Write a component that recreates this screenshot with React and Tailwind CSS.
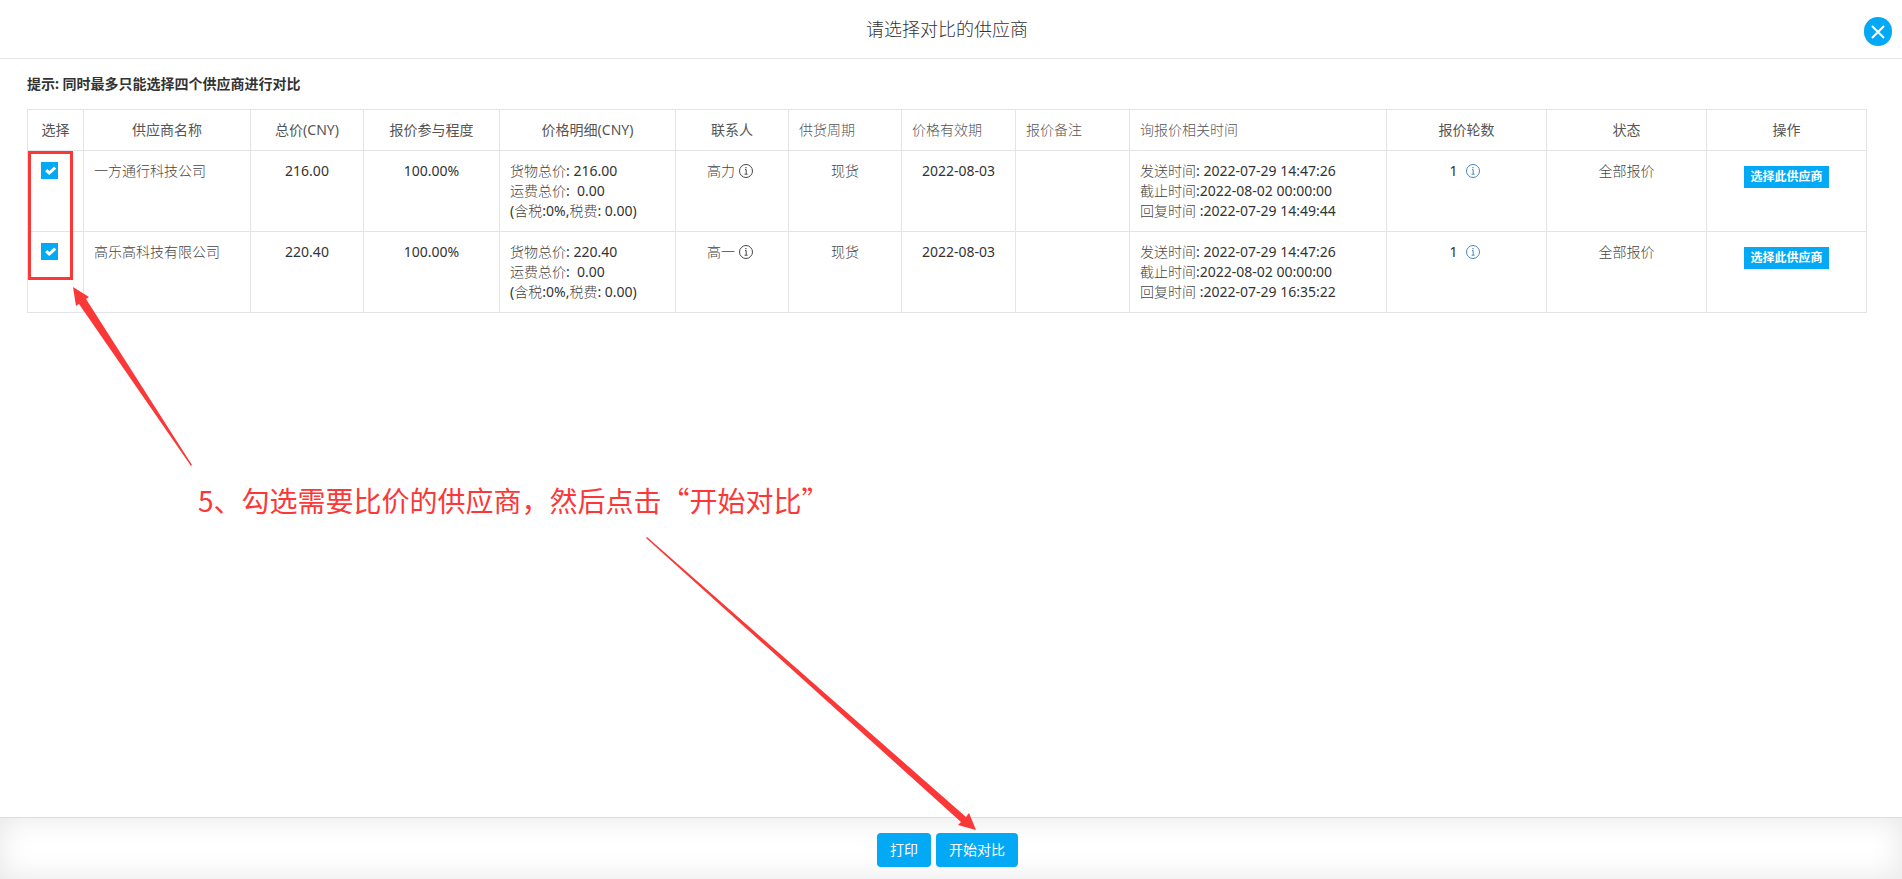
import React, { useState } from 'react';

const COLUMNS = [
  { title: '选择', width: 56, align: 'text-center', strong: true },
  { title: '供应商名称', width: 167, align: 'text-center', strong: true },
  { title: '总价(CNY)', width: 113, align: 'text-center', strong: true },
  { title: '报价参与程度', width: 136, align: 'text-center', strong: true },
  { title: '价格明细(CNY)', width: 176, align: 'text-center', strong: true },
  { title: '联系人', width: 113, align: 'text-center', strong: true },
  { title: '供货周期', width: 113, align: 'text-left' },
  { title: '价格有效期', width: 114, align: 'text-left' },
  { title: '报价备注', width: 114, align: 'text-left' },
  { title: '询报价相关时间', width: 257, align: 'text-left' },
  { title: '报价轮数', width: 160, align: 'text-center', strong: true },
  { title: '状态', width: 160, align: 'text-center', strong: true },
  { title: '操作', width: 160, align: 'text-center', strong: true },
];

const SUPPLIERS = [
  {
    id: 1, name: '一方通行科技公司', total: '216.00', rate: '100.00%', goods: '216.00', freight: '0.00',
    tax: '0%', taxFee: '0.00', contact: '高力', cycle: '现货', validUntil: '2022-08-03', remark: '',
    sentAt: '2022-07-29 14:47:26', deadline: '2022-08-02 00:00:00', repliedAt: '2022-07-29 14:49:44',
    rounds: 1, status: '全部报价',
  },
  {
    id: 2, name: '高乐高科技有限公司', total: '220.40', rate: '100.00%', goods: '220.40', freight: '0.00',
    tax: '0%', taxFee: '0.00', contact: '高一', cycle: '现货', validUntil: '2022-08-03', remark: '',
    sentAt: '2022-07-29 14:47:26', deadline: '2022-08-02 00:00:00', repliedAt: '2022-07-29 16:35:22',
    rounds: 1, status: '全部报价',
  },
];

const CELL = 'border border-[#e2e4e7] px-[10px] py-[10px] align-top';

function Label({ children }) {
  return <span className="font-light text-[#444]">{children}</span>;
}

function InfoIcon({ className }) {
  return (
    <svg viewBox="0 0 14 14" className={`inline-block w-[14px] h-[14px] ${className}`} fill="none" stroke="currentColor">
      <circle cx="7" cy="7" r="6.5" strokeWidth="0.9" />
      <path d="M6 5.6h1.2v4.4M5.6 10.2h3" strokeWidth="0.9" />
      <path d="M6.4 3.6h1.1" strokeWidth="1.2" />
    </svg>
  );
}

function SupplierRow({ item, checked, onToggle }) {
  return (
    <tr className="h-[81px]">
      <td className={CELL}>
        <label className="relative flex w-[17px] h-[17px] ml-[3px] mt-px">
          <input
            type="checkbox"
            aria-label={item.name}
            checked={checked}
            onChange={onToggle}
            className="peer appearance-none w-[17px] h-[17px] border border-[#03a9f4] checked:bg-[#03a9f4]"
          />
          <svg viewBox="0 0 17 17" className="absolute inset-0 hidden peer-checked:block pointer-events-none" fill="none" stroke="#fff" strokeWidth="3">
            <path d="M5.2 8.2l3 2.8 6-5.4" />
          </svg>
        </label>
      </td>
      <td className={CELL}><Label>{item.name}</Label></td>
      <td className={`${CELL} text-center`}>{item.total}</td>
      <td className={`${CELL} text-center`}>{item.rate}</td>
      <td className={`${CELL} whitespace-nowrap`}>
        <div><Label>货物总价</Label>: {item.goods}</div>
        <div><Label>运费总价</Label>:&nbsp; {item.freight}</div>
        <div>(<Label>含税</Label>:{item.tax},<Label>税费</Label>: {item.taxFee})</div>
      </td>
      <td className={`${CELL} text-center`}>
        <span className="inline-flex items-center gap-1 pr-1">
          <Label>{item.contact}</Label>
          <InfoIcon className="text-[#333]" />
        </span>
      </td>
      <td className={`${CELL} text-center`}><Label>{item.cycle}</Label></td>
      <td className={`${CELL} text-center`}>{item.validUntil}</td>
      <td className={CELL}>{item.remark}</td>
      <td className={`${CELL} whitespace-nowrap`}>
        <div><Label>发送时间</Label>: {item.sentAt}</div>
        <div><Label>截止时间</Label>:{item.deadline}</div>
        <div><Label>回复时间</Label> :{item.repliedAt}</div>
      </td>
      <td className={`${CELL} text-center`}>
        <span className="inline-flex items-center gap-2 pr-1">
          {item.rounds}
          <InfoIcon className="text-[#337ab7]" />
        </span>
      </td>
      <td className={`${CELL} text-center`}><Label>{item.status}</Label></td>
      <td className={`${CELL} text-center`}>
        <button type="button" className="mt-[5px] h-[22px] px-[6px] bg-[#03a9f4] text-white text-xs leading-[22px] font-bold align-top">
          选择此供应商
        </button>
      </td>
    </tr>
  );
}

function Annotations() {
  return (
    <div className="absolute inset-0 pointer-events-none">
      <div className="absolute left-[28px] top-[151px] w-[45px] h-[129px] border-[3px] border-[#fb3838]" />
      <svg className="absolute inset-0 w-full h-full" fill="#fb3838">
        <path d="M73 287L89 297L86 299L192 465L191 466L79 304L76 306Z" />
        <path d="M976 830L969 813L966 817L647 537L646 538L961 822L958 825Z" />
      </svg>
      <p className="absolute left-[198px] top-[480px] text-[28px] leading-[40px] text-[#fb3838] whitespace-nowrap font-['Noto_Sans_CJK_SC',sans-serif]">
        5、勾选需要比价的供应商，然后点击“开始对比”
      </p>
    </div>
  );
}

export default function App() {
  const [selected, setSelected] = useState([1, 2]);

  const toggle = (id) =>
    setSelected((prev) => (prev.includes(id) ? prev.filter((x) => x !== id) : [...prev, id]));

  return (
    <div lang="zh-CN" className="relative flex flex-col min-h-screen bg-white text-sm leading-5 text-[#333] font-['Noto_Sans','Noto_Sans_CJK_SC',sans-serif]">
      <header className="relative flex items-center justify-center h-[59px] pr-2 border-b border-[#e2e4e7]">
        <h1 className="text-lg leading-6 font-light">请选择对比的供应商</h1>
        <button type="button" aria-label="关闭" className="absolute right-[10px] top-[17px] flex items-center justify-center w-7 h-[29px] rounded-full bg-[#03a9f4]">
          <svg viewBox="0 0 14 14" className="w-[14px] h-[14px]" stroke="#fff" strokeWidth="2" fill="none">
            <path d="M1 1l12 12M13 1L1 13" />
          </svg>
        </button>
      </header>

      <main className="flex-1 pl-[27px] pr-[35px] pt-[15px]">
        <p className="font-bold mb-[15px]">提示: 同时最多只能选择四个供应商进行对比</p>
        <table className="w-full table-fixed border-collapse">
          <colgroup>
            {COLUMNS.map((c) => <col key={c.title} style={{ width: c.width }} />)}
          </colgroup>
          <thead>
            <tr className="h-[41px]">
              {COLUMNS.map((c) => (
                <th
                  key={c.title}
                  className={`${CELL} text-[#555] ${c.align} ${c.strong ? 'font-normal' : 'font-light'}`}
                >
                  {c.title}
                </th>
              ))}
            </tr>
          </thead>
          <tbody>
            {SUPPLIERS.map((s) => (
              <SupplierRow key={s.id} item={s} checked={selected.includes(s.id)} onToggle={() => toggle(s.id)} />
            ))}
          </tbody>
        </table>
      </main>

      <footer className="flex items-start justify-center gap-[5px] h-[62px] pt-[15px] pr-[7px] border-t border-[#ddd] shadow-[inset_0_0_30px_rgba(0,0,0,0.1)]">
        <button type="button" className="h-[34px] px-[13px] rounded bg-[#03a9f4] text-white">打印</button>
        <button type="button" className="h-[34px] px-[13px] rounded bg-[#03a9f4] text-white">开始对比</button>
      </footer>

      <Annotations />
    </div>
  );
}
